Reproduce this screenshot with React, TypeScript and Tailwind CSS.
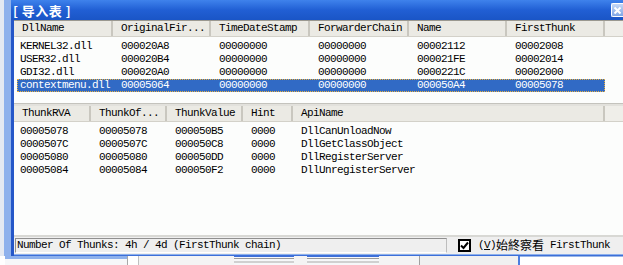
import React from "react";

const mono = "font-['Liberation_Mono','DejaVu_Sans_Mono',monospace] text-[11px] tracking-[-0.6px] text-black";

const upperCols = [
  { name: "DllName", w: 99 },
  { name: "OriginalFir...", w: 98 },
  { name: "TimeDateStamp", w: 99 },
  { name: "ForwarderChain", w: 99 },
  { name: "Name", w: 98 },
  { name: "FirstThunk", w: 98 },
];

const upperRows = [
  ["KERNEL32.dll", "000020A8", "00000000", "00000000", "00002112", "00002008"],
  ["USER32.dll", "000020B4", "00000000", "00000000", "000021FE", "00002014"],
  ["GDI32.dll", "000020A0", "00000000", "00000000", "0000221C", "00002000"],
  ["contextmenu.dll", "00005064", "00000000", "00000000", "000050A4", "00005078"],
];

const lowerCols = [
  { name: "ThunkRVA", w: 77 },
  { name: "ThunkOf...", w: 76 },
  { name: "ThunkValue", w: 76 },
  { name: "Hint", w: 50 },
  { name: "ApiName", w: 312 },
];

const lowerRows = [
  ["00005078", "00005078", "000050B5", "0000", "DllCanUnloadNow"],
  ["0000507C", "0000507C", "000050C8", "0000", "DllGetClassObject"],
  ["00005080", "00005080", "000050DD", "0000", "DllRegisterServer"],
  ["00005084", "00005084", "000050F2", "0000", "DllUnregisterServer"],
];

function Header({ cols }: { cols: { name: string; w: number }[] }) {
  return (
    <div className="flex h-[16px] bg-[#ebeae4] border-b border-[#d3d1c9] shrink-0">
      {cols.map((c) => (
        <div
          key={c.name}
          style={{ width: c.w }}
          className={`${mono} shrink-0 flex items-center pl-[8px] border-r-2 border-r-[#c9c7bf] whitespace-nowrap overflow-hidden`}
        >
          {c.name}
        </div>
      ))}
      <div className="flex-1 bg-[#efeee9]" />
    </div>
  );
}

function Rows({
  cols,
  rows,
  selected,
}: {
  cols: { name: string; w: number }[];
  rows: string[][];
  selected?: number;
}) {
  const total = cols.reduce((a, c) => a + c.w, 0);
  return (
    <div className="flex flex-col pt-[3px]">
      {rows.map((r, i) => {
        const sel = i === selected;
        return (
          <div
            key={i}
            style={{ width: total - 3 }}
            className={`flex h-[13px] ml-[3px] ${sel ? "bg-[#316ac5] outline-1 outline-dotted outline-[#e8b040] -outline-offset-1" : ""}`}
          >
            {r.map((v, j) => (
              <div
                key={j}
                style={{ width: j === 0 ? cols[j].w - 3 : cols[j].w }}
                className={`${mono} shrink-0 flex items-center whitespace-nowrap leading-none ${j === 0 ? "pl-[3px]" : "pl-[8px]"} ${sel ? "text-white" : ""}`}
              >
                {v}
              </div>
            ))}
          </div>
        );
      })}
    </div>
  );
}

export default function App() {
  return (
    <div className="w-[623px] h-[265px] bg-[#f6f7f9] overflow-hidden flex flex-col">
      <div className="flex h-[256px] shrink-0">
        {/* background window edge */}
        <div className="w-[4px] bg-[#e4e9f2]" />
        <div className="w-[7px] bg-[#8eb1ec]" />
        {/* dialog */}
        <div className="flex-1 flex flex-col">
          <div className="h-[20px] shrink-0 bg-gradient-to-b from-[#3f82ec] via-[#215fd4] to-[#1a55c6] flex items-center justify-between pl-[2px]">
            <span className="font-['Noto_Sans_CJK_SC',sans-serif] text-[13px] font-bold text-white leading-none tracking-[0.5px]">
              [ 导入表 ]
            </span>
            <div className="w-[12px] h-[14px] bg-gradient-to-b from-[#c7d8f5] to-[#7fa6e6] border border-white border-r-0 rounded-l-[2px] flex items-center justify-center">
              <svg width="9" height="9" viewBox="0 0 9 9">
                <path d="M1.5 1.5 L7.5 7.5 M7.5 1.5 L1.5 7.5" stroke="white" strokeWidth="2" />
              </svg>
            </div>
          </div>
          <div className="flex-1 flex">
            <div className="w-[3px] bg-[#2557c8]" />
            <div className="flex-1 flex flex-col bg-[#ece9d8]">
              {/* upper list */}
              <div className="h-[83px] shrink-0 bg-[#fcfdfc] flex flex-col border-t border-[#9a9890]">
                <Header cols={upperCols} />
                <Rows cols={upperCols} rows={upperRows} selected={3} />
              </div>
              <div className="h-[3px] bg-[#e2e1dc] border-t border-[#c4c3bd]" />
              {/* lower list */}
              <div className="h-[129px] shrink-0 bg-[#fcfdfc] flex flex-col">
                <Header cols={lowerCols} />
                <Rows cols={lowerCols} rows={lowerRows} />
              </div>
              {/* status bar */}
              <div className="flex-1 flex items-center bg-[#efefef] border-t-2 border-[#d8d8d4] pl-[1px]">
                <div className={`${mono} w-[432px] h-[15px] flex items-center pl-[1px] border border-t-[#8f8f8f] border-l-[#8f8f8f] border-b-white border-r-[#bdbdbd] whitespace-nowrap`}>
                  Number Of Thunks: 4h / 4d (FirstThunk chain)
                </div>
                <div className="ml-[11px] w-[13px] h-[13px] border-2 border-black bg-white flex items-center justify-center">
                  <svg width="9" height="9" viewBox="0 0 9 9">
                    <path d="M1 4.5 L3.5 7 L8 1.5" stroke="black" strokeWidth="2" fill="none" />
                  </svg>
                </div>
                <div className="ml-[7px] flex items-center whitespace-nowrap">
                  <span className={mono}>
                    (<span className="underline">V</span>)
                  </span>
                  <span className="font-['Noto_Sans_CJK_SC',sans-serif] text-[12px] text-black leading-none">始終察看</span>
                  <span className={`${mono} ml-[6px]`}>FirstThunk</span>
                </div>
              </div>
              <div className="h-[3px] bg-[#3d6fd8] border-t border-[#8db0ec]" />
            </div>
          </div>
        </div>
      </div>
      {/* background clutter below the dialog */}
      <div className="flex-1 flex">
        <div className="w-[5px] bg-white" />
        <div className="w-[122px] h-[3px] bg-[#8eb1ec]" />
        <div className="w-[1px] bg-[#a8a8a8]" />
        <div className="w-[10px] bg-white" />
        <div className="w-[1px] bg-[#c0c0c0]" />
        <div className="w-[95px] bg-[#f4f4f4]" />
        <div className="w-[60px] flex flex-col pt-[2px] gap-[2px]">
          <div className="h-[1px] bg-[#9a9a9a]" />
          <div className="h-[2px] bg-[#d0d0d0]" />
        </div>
        <div className="w-[13px] bg-[#f4f4f4]" />
        <div className="w-[72px] flex flex-col pt-[2px] gap-[2px]">
          <div className="h-[1px] bg-[#9a9a9a]" />
          <div className="h-[2px] bg-[#d0d0d0]" />
        </div>
        <div className="w-[40px] bg-[#f4f4f4]" />
        <div className="w-[1px] bg-[#a0a0a0]" />
        <div className="w-[98px] bg-[#f0f0f0]" />
        <div className="w-[2px] bg-[#4b7ee0]" />
        <div className="flex-1 bg-white border-t border-[#9ab6e6]" />
      </div>
    </div>
  );
}
